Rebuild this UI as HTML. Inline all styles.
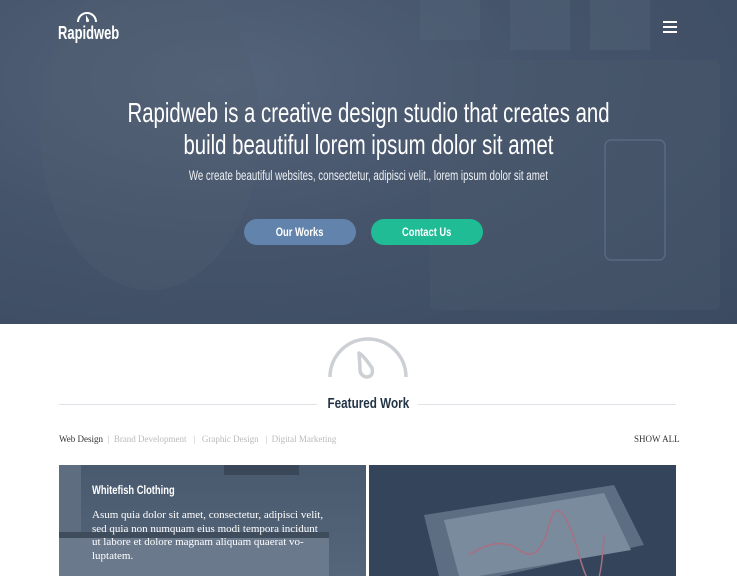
<!DOCTYPE html>
<html><head><meta charset="utf-8"><style>
*{margin:0;padding:0;box-sizing:border-box}
body{width:737px;height:576px;overflow:hidden;background:#fff;font-family:"Liberation Serif",serif;position:relative}
.hero{position:absolute;left:0;top:0;width:737px;height:324px;background:radial-gradient(ellipse at 30% 25%,#55647a 0%,#45546a 45%,#3b4a60 100%);overflow:hidden}
.cond{font-family:"Liberation Sans",sans-serif;font-weight:bold;display:inline-block;transform:scaleX(.78);transform-origin:center;white-space:nowrap}
.logo{position:absolute;left:58px;top:23px;color:#fff;font-size:18px}
.h1{position:absolute;left:0;width:737px;text-align:center;color:#fff;font-size:28px}
.sub{position:absolute;left:0;top:168px;width:737px;text-align:center;color:#eef1f5;font-size:13.5px}
.btn{position:absolute;top:219px;width:112px;height:26px;border-radius:13px;color:#fff;text-align:center;line-height:26px;font-size:12px}
.tabs{position:absolute;top:434px;left:59px;font-size:9px;color:#bbb;white-space:nowrap}
</style></head><body>
<div class="hero">
 <svg width="737" height="324" style="position:absolute;left:0;top:0">
  <ellipse cx="150" cy="130" rx="110" ry="160" fill="#4f5e70" opacity=".35"/>
  <rect x="420" y="0" width="60" height="40" fill="#56667a" opacity=".35"/>
  <rect x="510" y="0" width="60" height="50" fill="#56667a" opacity=".35"/>
  <rect x="590" y="0" width="60" height="50" fill="#56667a" opacity=".35"/>
  <rect x="430" y="60" width="290" height="250" fill="#4c5c70" opacity=".35" rx="6"/>
  <rect x="605" y="140" width="60" height="120" fill="none" stroke="#62728a" stroke-width="1.5" rx="6" opacity=".7"/>
 </svg>
 <div class="logo"><svg width="22" height="12" style="position:absolute;left:18px;top:-12px" viewBox="0 0 22 12"><path d="M2 11 A9 9 0 0 1 20 11" fill="none" stroke="#fff" stroke-width="2"/><path d="M10 4 L13 9 A1.5 1.5 0 0 1 10 10 Z" fill="#fff"/></svg><span class="cond" style="transform-origin:left;transform:scaleX(.72)">Rapidweb</span></div>
 <div style="position:absolute;left:663px;top:21px;width:14px"><div style="height:2px;background:#fff;margin-bottom:3px"></div><div style="height:2px;background:#fff;margin-bottom:3px"></div><div style="height:2px;background:#fff"></div></div>
 <div class="h1" style="top:97px"><span class="cond" style="font-weight:normal;transform:scaleX(.727)">Rapidweb is a creative design studio that creates and</span></div>
 <div class="h1" style="top:129px"><span class="cond" style="font-weight:normal;transform:scaleX(.727)">build beautiful lorem ipsum dolor sit amet</span></div>
 <div class="sub"><span class="cond" style="font-weight:normal;transform:scaleX(.72)">We create beautiful websites, consectetur, adipisci velit., lorem ipsum dolor sit amet</span></div>
 <div class="btn" style="left:244px;background:#6283ab"><span class="cond">Our Works</span></div>
 <div class="btn" style="left:371px;background:#1fbc95"><span class="cond">Contact Us</span></div>
</div>
<svg width="80" height="55" style="position:absolute;left:328px;top:332px" viewBox="0 0 80 55"><path d="M2 45 A38 38 0 0 1 78 45" fill="none" stroke="#ccd0d5" stroke-width="3.5"/><path d="M31 21 Q36 24 44 36 Q46 45 38 45 Q31 43 32 35 Z" fill="none" stroke="#ccd0d5" stroke-width="3.5" stroke-linejoin="round"/></svg>
<div style="position:absolute;left:59px;top:404px;width:258px;height:1px;background:#dfe2e6"></div>
<div style="position:absolute;left:418px;top:404px;width:258px;height:1px;background:#dfe2e6"></div>
<div style="position:absolute;left:308px;top:395px;width:120px;text-align:center;color:#243447;font-size:15px"><span class="cond">Featured Work</span></div>
<div class="tabs"><span style="color:#333">Web Design</span> &nbsp;|&nbsp; Brand Development &nbsp; | &nbsp; Graphic Design &nbsp; | &nbsp;Digital Marketing</div>
<div style="position:absolute;top:434px;left:634px;font-size:9px;color:#333">SHOW ALL</div>
<div style="position:absolute;left:59px;top:465px;width:307px;height:111px;background:linear-gradient(#4a5a6e,#56667a);overflow:hidden">
 <div style="position:absolute;left:0;top:0;width:22px;height:111px;background:#5e6d80"></div>
 <div style="position:absolute;left:165px;top:0;width:75px;height:10px;background:#3a4758"></div>
 <div style="position:absolute;left:0;top:67px;width:270px;height:50px;background:#6a798b;border-top:6px solid #3f4c5c"></div>
 <div style="position:absolute;left:33px;top:18px;color:#fff;font-size:12px"><span class="cond" style="transform-origin:left">Whitefish Clothing</span></div>
 <div style="position:absolute;left:33px;top:44px;width:232px;color:#fff;font-size:11px;line-height:13.5px">Asum quia dolor sit amet, consectetur, adipisci velit, sed quia non numquam eius modi tempora incidunt ut labore et dolore magnam aliquam quaerat vo-luptatem.</div>
</div>
<div style="position:absolute;left:369px;top:465px;width:307px;height:111px;background:#34445a;overflow:hidden">
 <svg width="307" height="111"><polygon points="55,50 245,20 275,80 130,111 70,111" fill="#5e6e82"/><polygon points="75,55 235,28 262,85 110,111 90,111" fill="#7b8b9e"/><path d="M100 90 Q130 70 150 85 T180 60 T210 90 T235 70" fill="none" stroke="#a87080" stroke-width="1.5"/></svg>
</div>
</body></html>
